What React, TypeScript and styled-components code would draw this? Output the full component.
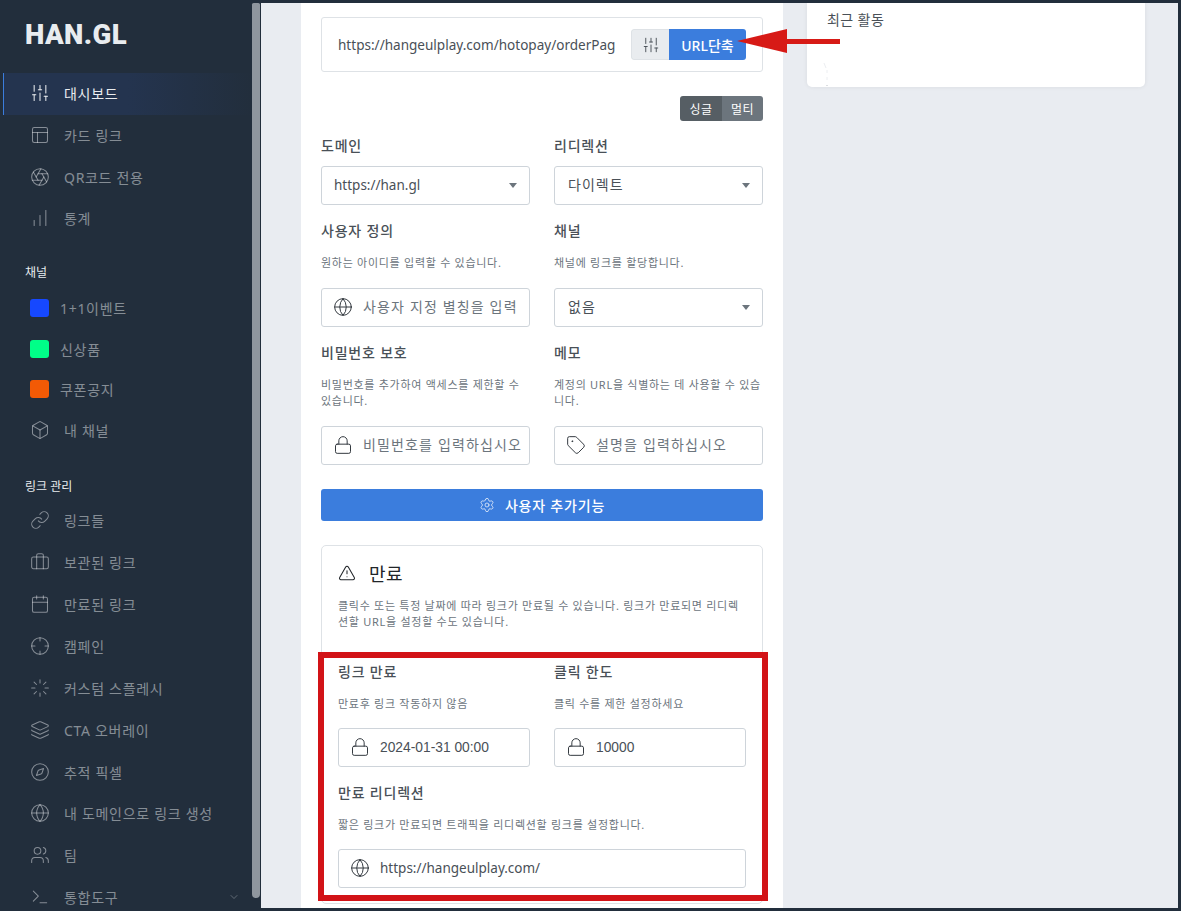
import { ReactNode } from "react";
import styled, { createGlobalStyle } from "styled-components";
import {
  Aperture,
  Box,
  Briefcase,
  Calendar,
  ChartNoAxesColumnIncreasing,
  ChevronDown,
  Compass,
  Crosshair,
  Globe,
  Layers,
  Layout,
  Link,
  Loader,
  Lock,
  Settings,
  SlidersVertical,
  Tag,
  Terminal,
  TriangleAlert,
  Users,
} from "lucide-react";

const FONT = `"Noto Sans", "Noto Sans CJK KR", sans-serif`;

const GlobalStyle = createGlobalStyle`
  html, body {
    margin: 0;
    padding: 0;
    background: #222e3c;
    font-family: ${FONT};
  }
  * { box-sizing: border-box; }
`;

const Page = styled.div`
  position: relative;
  display: flex;
  width: 1181px;
  height: 911px;
  overflow: hidden;
  background: #222e3c;
`;

/* sidebar */
const Sidebar = styled.nav`
  position: relative;
  flex: 0 0 261px;
  height: 911px;
  padding: 0 9px 0 3px;
  overflow: hidden;
`;

const ScrollThumb = styled.div`
  position: absolute;
  top: 3px;
  right: 1px;
  width: 8px;
  height: 895px;
  background: #8f969e;
  border-radius: 2px 2px 5px 5px;
`;

const Logo = styled.div`
  height: 73px;
  padding: 20px 0 0 22px;
  font-family: "Roboto", sans-serif;
  font-size: 27.5px;
  line-height: 30px;
  font-weight: 900;
  letter-spacing: 0.4px;
  color: #e9ecef;
`;

const NavItem = styled.a<{ $active?: boolean; $channel?: boolean }>`
  display: flex;
  align-items: center;
  height: ${(p) => (p.$channel ? "40.8px" : "41.85px")};
  padding-left: 27px;
  padding-bottom: 2px;
  font-size: 14px;
  letter-spacing: 0.7px;
  color: ${(p) => (p.$active ? "#e9ecef" : "rgba(233, 236, 239, 0.5)")};
  border-left: 1px solid ${(p) => (p.$active ? "#3b7ddd" : "transparent")};
  background: ${(p) =>
    p.$active ? "linear-gradient(90deg, #24344f 0%, #24344f 50%, #222e3c 100%)" : "none"};

  svg {
    flex: none;
    width: 20px;
    height: 20px;
    margin: 0 14px 0 -1px;
    stroke-width: 1.25;
  }
`;

const ExpandIcon = styled.span`
  display: flex;
  margin-left: auto;
  padding-right: 12px;

  && svg {
    width: 12px;
    height: 12px;
    margin: 0;
  }
`;

const SectionTitle = styled.div<{ $top: number }>`
  margin-top: ${(p) => p.$top}px;
  padding-left: 22px;
  font-size: 12px;
  line-height: 18px;
  color: #e9ecef;
`;

const Swatch = styled.span<{ $color: string }>`
  flex: none;
  width: 19px;
  height: 18px;
  margin: 0 11px 0 -1px;
  border-radius: 3px;
  background: ${(p) => p.$color};
`;

const ChannelList = styled.div<{ $top: number }>`
  margin-top: ${(p) => p.$top}px;
`;

/* main area */
const Main = styled.main`
  display: flex;
  flex: 1;
  gap: 24px;
  height: 905px;
  margin: 3px 3px 0 0;
  padding: 0 33px 0 40px;
  background: #e9ecf1;
  overflow: hidden;
`;

const Panel = styled.section`
  flex: 0 0 482px;
  height: 905px;
  padding: 14px 20px 0;
  background: #fff;
`;

const SideCard = styled.aside`
  position: relative;
  flex: 0 0 338px;
  height: 84px;
  padding: 7px 20px;
  background: #fff;
  border-radius: 0 0 5px 5px;
  box-shadow: 0 0 4px rgba(33, 37, 41, 0.08);
  font-size: 14px;
  line-height: 20px;
  letter-spacing: 0.4px;
  color: #495057;
`;

const Speck = styled.svg`
  position: absolute;
  left: 16px;
  top: 58px;
`;

const UrlBox = styled.div`
  display: flex;
  align-items: center;
  justify-content: space-between;
  height: 55px;
  padding: 0 16px;
  border: 1px solid #dee2e6;
  border-radius: 3px;
`;

const UrlText = styled.span`
  font-size: 13.55px;
  color: #495057;
  white-space: nowrap;
`;

const ButtonGroup = styled.div`
  display: flex;
  height: 31px;
  border-radius: 3px;
  overflow: hidden;
`;

const OptionButton = styled.span`
  display: flex;
  align-items: center;
  justify-content: center;
  width: 38px;
  background: #e9ecef;
  border: 1px solid #dee2e6;
  border-right: 0;
  border-radius: 3px 0 0 3px;
  color: #495057;

  svg {
    width: 18px;
    height: 18px;
    stroke-width: 1.25;
  }
`;

const ShortenButton = styled.span`
  display: flex;
  align-items: center;
  justify-content: center;
  width: 77px;
  background: #3b7ddd;
  color: #fff;
  font-size: 14px;
  font-weight: 500;
`;

const ToggleRow = styled.div`
  display: flex;
  justify-content: flex-end;
  margin-top: 24px;
`;

const Toggle = styled.span<{ $on?: boolean }>`
  display: flex;
  align-items: center;
  justify-content: center;
  width: ${(p) => (p.$on ? "42px" : "41px")};
  height: 25px;
  font-size: 12px;
  letter-spacing: 0.5px;
  color: #fff;
  background: ${(p) => (p.$on ? "#565e64" : "#6c757d")};
  border-radius: ${(p) => (p.$on ? "3px 0 0 3px" : "0 3px 3px 0")};
`;

const FormGrid = styled.div`
  display: grid;
  grid-template-columns: 1fr 1fr;
  column-gap: 24px;
`;

const FieldWrap = styled.div<{ $top: number }>`
  margin-top: ${(p) => p.$top}px;
  min-width: 0;
`;

const Label = styled.div`
  font-size: 14px;
  line-height: 20px;
  font-weight: 500;
  letter-spacing: 0.8px;
  color: #495057;
`;

const Help = styled.p<{ $gap?: number }>`
  margin: ${(p) => p.$gap ?? 14}px 0 0;
  font-size: 11px;
  line-height: 16px;
  letter-spacing: 0.72px;
  word-break: break-all;
  color: #6c757d;
`;

const InputBox = styled.div<{ $top: number }>`
  display: flex;
  align-items: center;
  height: 39px;
  margin-top: ${(p) => p.$top}px;
  padding: 0 12px 1px;
  border: 1px solid #ced4da;
  border-radius: 3px;
  background: #fff;
  font-size: 13.5px;
  color: #495057;
  white-space: nowrap;
  overflow: hidden;

  svg {
    flex: none;
    width: 20px;
    height: 20px;
    margin: 0 10px 0 -1px;
    stroke-width: 1.2;
    color: #343a40;
  }
`;

const Placeholder = styled.span`
  margin-bottom: 2px;
  font-size: 14px;
  letter-spacing: 1.15px;
  color: #6c757d;
`;

const KoreanValue = styled.span`
  margin: 0 0 2px 1px;
  font-size: 14px;
  letter-spacing: 1px;
`;

const DateText = styled.span`
  font-family: "Liberation Sans", sans-serif;
  font-size: 13.8px;
`;

const Caret = styled.span`
  width: 0;
  height: 0;
  margin-left: auto;
  border-left: 4px solid transparent;
  border-right: 4px solid transparent;
  border-top: 5px solid #6c757d;
`;

const WideButton = styled.div`
  display: flex;
  align-items: center;
  justify-content: center;
  height: 32px;
  margin-top: 24px;
  background: #3b7ddd;
  border-radius: 3px;
  color: #fff;
  font-size: 14px;
  font-weight: 500;
  letter-spacing: 0.8px;

  svg {
    width: 16px;
    height: 16px;
    margin-right: 10px;
    stroke-width: 1.25;
    opacity: 0.85;
  }
`;

const ExpireCard = styled.div`
  height: 359px;
  margin-top: 24px;
  padding: 13px 16px 0;
  border: 1px solid #dee2e6;
  border-radius: 5px;
`;

const ExpireTitle = styled.div`
  display: flex;
  align-items: center;
  height: 28px;
  font-size: 18px;
  letter-spacing: 0.5px;
  color: #212529;

  svg {
    width: 18px;
    height: 18px;
    margin-right: 13px;
    stroke-width: 1.4;
  }
`;

/* annotations painted over the screenshot */
const RedFrame = styled.div`
  position: absolute;
  left: 318px;
  top: 652px;
  width: 450px;
  height: 249px;
  border: 6px solid #d21317;
  pointer-events: none;
`;

const RedArrow = styled.svg`
  position: absolute;
  left: 735px;
  top: 26px;
`;

const topItems = [
  { icon: <Layout />, text: "카드 링크" },
  { icon: <Aperture />, text: "QR코드 전용" },
  { icon: <ChartNoAxesColumnIncreasing />, text: "통계" },
];

const channels = [
  { color: "#1648ff", text: "1+1이벤트" },
  { color: "#00ff88", text: "신상품" },
  { color: "#f25a05", text: "쿠폰공지" },
];

const linkItems = [
  { icon: <Link />, text: "링크들" },
  { icon: <Briefcase />, text: "보관된 링크" },
  { icon: <Calendar />, text: "만료된 링크" },
  { icon: <Crosshair />, text: "캠페인" },
  { icon: <Loader />, text: "커스텀 스플레시" },
  { icon: <Layers />, text: "CTA 오버레이" },
  { icon: <Compass />, text: "추적 픽셀" },
  { icon: <Globe />, text: "내 도메인으로 링크 생성" },
  { icon: <Users />, text: "팀" },
];

const Field = ({
  top,
  label,
  help,
  gap,
  boxTop,
  children,
}: {
  top: number;
  label: string;
  help?: ReactNode;
  gap?: number;
  boxTop: number;
  children: ReactNode;
}) => (
  <FieldWrap $top={top}>
    <Label>{label}</Label>
    {help && <Help $gap={gap}>{help}</Help>}
    <InputBox $top={boxTop}>{children}</InputBox>
  </FieldWrap>
);

export default function App() {
  return (
    <Page>
      <GlobalStyle />
      <Sidebar>
        <Logo>HAN.GL</Logo>
        <NavItem $active>
          <SlidersVertical />
          대시보드
        </NavItem>
        {topItems.map((item) => (
          <NavItem key={item.text}>
            {item.icon}
            {item.text}
          </NavItem>
        ))}
        <SectionTitle $top={24}>채널</SectionTitle>
        <ChannelList $top={6}>
          {channels.map((c) => (
            <NavItem $channel key={c.text}>
              <Swatch $color={c.color} />
              {c.text}
            </NavItem>
          ))}
          <NavItem $channel>
            <Box />내 채널
          </NavItem>
        </ChannelList>
        <SectionTitle $top={26}>링크 관리</SectionTitle>
        <ChannelList $top={5}>
          {linkItems.map((item) => (
            <NavItem key={item.text}>
              {item.icon}
              {item.text}
            </NavItem>
          ))}
          <NavItem>
            <Terminal />
            통합도구
            <ExpandIcon>
              <ChevronDown />
            </ExpandIcon>
          </NavItem>
        </ChannelList>
        <ScrollThumb />
      </Sidebar>

      <Main>
        <Panel>
          <UrlBox>
            <UrlText>https://hangeulplay.com/hotopay/orderPag</UrlText>
            <ButtonGroup>
              <OptionButton>
                <SlidersVertical />
              </OptionButton>
              <ShortenButton>URL단축</ShortenButton>
            </ButtonGroup>
          </UrlBox>

          <ToggleRow>
            <Toggle $on>싱글</Toggle>
            <Toggle>멀티</Toggle>
          </ToggleRow>

          <FormGrid>
            <Field top={15} label="도메인" boxTop={10}>
              https://han.gl
              <Caret />
            </Field>
            <Field top={15} label="리디렉션" boxTop={10}>
              <KoreanValue>다이렉트</KoreanValue>
              <Caret />
            </Field>
            <Field top={16} label="사용자 정의" help="원하는 아이디를 입력할 수 있습니다." boxTop={17}>
              <Globe />
              <Placeholder>사용자 지정 별칭을 입력</Placeholder>
            </Field>
            <Field top={16} label="채널" help="채널에 링크를 할당합니다." boxTop={17}>
              <KoreanValue>없음</KoreanValue>
              <Caret />
            </Field>
            <Field
              top={16}
              label="비밀번호 보호"
              help="비밀번호를 추가하여 액세스를 제한할 수 있습니다."
              boxTop={17}
            >
              <Lock />
              <Placeholder>비밀번호를 입력하십시오</Placeholder>
            </Field>
            <Field
              top={16}
              label="메모"
              help="계정의 URL을 식별하는 데 사용할 수 있습니다."
              boxTop={17}
            >
              <Tag />
              <Placeholder>설명을 입력하십시오</Placeholder>
            </Field>
          </FormGrid>

          <WideButton>
            <Settings />
            사용자 추가기능
          </WideButton>

          <ExpireCard>
            <ExpireTitle>
              <TriangleAlert />
              만료
            </ExpireTitle>
            <Help $gap={11}>
              클릭수 또는 특정 날짜에 따라 링크가 만료될 수 있습니다. 링크가 만료되면 리디렉션할 URL을 설정할 수도
              있습니다.
            </Help>
            <FormGrid>
              <Field top={32} label="링크 만료" help="만료후 링크 작동하지 않음" boxTop={16}>
                <Lock />
                <DateText>2024-01-31 00:00</DateText>
              </Field>
              <Field top={32} label="클릭 한도" help="클릭 수를 제한 설정하세요" boxTop={16}>
                <Lock />
                <DateText>10000</DateText>
              </Field>
            </FormGrid>
            <Field
              top={16}
              label="만료 리디렉션"
              help="짧은 링크가 만료되면 트래픽을 리디렉션할 링크를 설정합니다."
              gap={14}
              boxTop={16}
            >
              <Globe />
              https://hangeulplay.com/
            </Field>
          </ExpireCard>
        </Panel>

        <SideCard>
          최근 활동
          <Speck width="6" height="26" viewBox="0 0 6 26">
            <path d="M1 2 L3 7 M4 9 L4 12 M4 16 L4 19" stroke="#eceef1" strokeWidth="1" fill="none" />
            <path d="M4 24 L4 25" stroke="#b9bec4" strokeWidth="1" />
          </Speck>
        </SideCard>
      </Main>

      <RedFrame />
      <RedArrow width="106" height="30" viewBox="0 0 106 30">
        <path d="M2 15 L52 3 L52 13 L105 13 L105 18 L52 18 L52 27 Z" fill="#d71a16" />
      </RedArrow>
    </Page>
  );
}
